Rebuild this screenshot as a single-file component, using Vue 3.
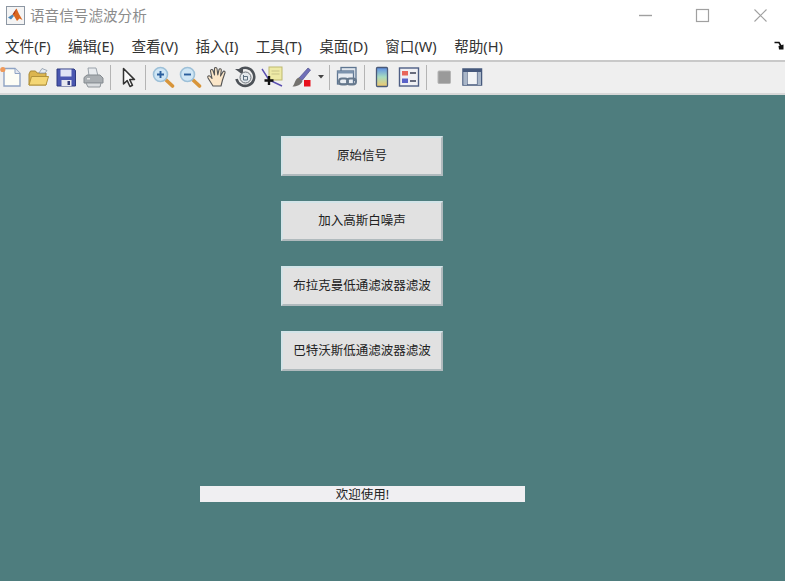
<script setup>
const menus = ['文件(F)', '编辑(E)', '查看(V)', '插入(I)', '工具(T)', '桌面(D)', '窗口(W)', '帮助(H)']
const buttons = ['原始信号', '加入高斯白噪声', '布拉克曼低通滤波器滤波', '巴特沃斯低通滤波器滤波']
</script>

<template>
  <div class="figure">
    <header class="titlebar">
      <svg class="logo" width="19" height="19" viewBox="0 0 19 19">
        <rect x="0.5" y="0.5" width="18" height="18" fill="#f4f4f4" stroke="#8d97a3" />
        <path d="M2 11.5 6.5 8.5 8 10 5 13.5Z" fill="#4a86b8" />
        <path d="M6.5 8.5 10.5 2.5 13 8 16.5 14 13.5 12.5 11 15 8 10Z" fill="#d9661f" />
        <path d="M10.5 2.5 8.5 8 6.5 8.5Z" fill="#a8391c" />
      </svg>
      <span class="title">语音信号滤波分析</span>
      <div class="win-controls">
        <button class="win-btn" type="button">
          <svg width="15" height="15" viewBox="0 0 15 15"><path d="M1 7.5H14" stroke="#a0a0a0" stroke-width="1.4" /></svg>
        </button>
        <button class="win-btn" type="button">
          <svg width="15" height="15" viewBox="0 0 15 15"><rect x="1.5" y="1.5" width="12" height="12" fill="none" stroke="#a0a0a0" stroke-width="1.2" /></svg>
        </button>
        <button class="win-btn" type="button">
          <svg width="15" height="15" viewBox="0 0 15 15"><path d="M1.5 1.5 13.5 13.5M13.5 1.5 1.5 13.5" stroke="#a0a0a0" stroke-width="1.1" /></svg>
        </button>
      </div>
    </header>

    <nav class="menubar">
      <span v-for="m in menus" :key="m" class="menu-item">{{ m }}</span>
      <svg class="dock" width="10" height="9" viewBox="0 0 10 9">
        <path d="M0.5 1.5H5L7 5" fill="none" stroke="#111" stroke-width="1.6" />
        <path d="M4.5 5 9.5 3.5V8.5H5Z" fill="#111" />
      </svg>
    </nav>

    <div class="toolbar">
      <div class="group">
        <!-- new -->
        <svg width="24" height="24" viewBox="0 0 24 24">
          <path d="M5 3.5H16L21 8.5V21H5Z" fill="#fdfdf6" stroke="#8fa3c4" stroke-width="1.4" />
          <path d="M16 3.5V8.5H21" fill="#e4e8f0" stroke="#8fa3c4" />
          <circle cx="3.8" cy="4.5" r="2.6" fill="#ef9a5a" />
        </svg>
        <!-- open -->
        <svg width="24" height="24" viewBox="0 0 24 24">
          <path d="M3 9V20H20V8H11L9.5 6H4.5Z" fill="#dcb54e" stroke="#a98a37" />
          <path d="M13 8 16 3.5 21 5.5 19 8Z" fill="#e6ecf2" stroke="#8b98a8" stroke-width="0.8" />
          <path d="M3 20 5.5 11.5H22.5L20 20Z" fill="#f4d675" stroke="#b3933a" />
        </svg>
        <!-- save -->
        <svg width="24" height="24" viewBox="0 0 24 24">
          <path d="M3 4H20L21.5 5.5V21H3Z" fill="#4a57b0" stroke="#2f3a80" />
          <rect x="6.5" y="4.5" width="11" height="7" fill="#dfe4f5" />
          <rect x="7.5" y="15" width="10" height="6" fill="#e8e8ef" />
          <rect x="13.5" y="16" width="2.5" height="4" fill="#333c7a" />
        </svg>
        <!-- print -->
        <svg width="24" height="24" viewBox="0 0 24 24">
          <path d="M7 3H15L17 11H8Z" fill="#e8ebee" stroke="#9aa2aa" />
          <path d="M3 12.5 6 10H19L22 13V18H3Z" fill="#a9aeb2" stroke="#858b90" />
          <path d="M5 18H20L19 22H7Z" fill="#d9dcdf" stroke="#8f959a" />
          <rect x="6" y="13" width="3" height="1.5" fill="#e5e5e5" />
        </svg>
      </div>
      <span class="sep"></span>
      <div class="group">
        <!-- arrow -->
        <svg width="24" height="24" viewBox="0 0 24 24">
          <path d="M7.5 3.5V19L11.2 15.6 14 21.5 16.5 20.3 13.7 14.6H18.5Z" fill="#fafafa" stroke="#333" stroke-width="1.5" stroke-linejoin="round" />
        </svg>
      </div>
      <span class="sep"></span>
      <div class="group">
        <!-- zoom in -->
        <svg width="24" height="24" viewBox="0 0 24 24">
          <path d="M14 14 21.5 21" stroke="#d8953a" stroke-width="3.6" stroke-linecap="round" />
          <circle cx="9.5" cy="9.5" r="7" fill="#cfe6f5" stroke="#9dc0d8" stroke-width="1.6" />
          <path d="M6 9.5H13M9.5 6V13" stroke="#2b5f9e" stroke-width="1.9" />
        </svg>
        <!-- zoom out -->
        <svg width="24" height="24" viewBox="0 0 24 24">
          <path d="M14 14 21.5 21" stroke="#d8953a" stroke-width="3.6" stroke-linecap="round" />
          <circle cx="9.5" cy="9.5" r="7" fill="#cfe6f5" stroke="#9dc0d8" stroke-width="1.6" />
          <path d="M6 9.5H13" stroke="#2b5f9e" stroke-width="1.9" />
        </svg>
        <!-- hand -->
        <svg width="24" height="24" viewBox="0 0 24 24">
          <path d="M8 21 3 13C2 11 4 10 5.3 11.5L7 13.5 5.5 6C5.3 4.3 7.5 4 8 5.5L9.5 10 9.5 3.7C9.5 2 11.8 2 12 3.7L12.8 10 14 4.7C14.4 3.2 16.5 3.6 16.3 5.2L15.5 11 18 6.7C18.8 5.5 20.6 6.3 20 7.8L17.5 15 16 21Z" fill="#fbe6c8" stroke="#555" stroke-width="1.1" stroke-linejoin="round" />
        </svg>
        <!-- rotate -->
        <svg width="24" height="24" viewBox="0 0 24 24">
          <path d="M7 4.5A9 9 0 1 1 3.5 14" fill="none" stroke="#4d5258" stroke-width="2.6" />
          <path d="M2 4H10V10Z" fill="#4d5258" />
          <circle cx="12.5" cy="12.5" r="5.5" fill="#e3e8ec" stroke="#6a7077" />
          <path d="M10.5 10V15H14.5V11.5H10.5" fill="none" stroke="#5d7080" />
        </svg>
        <!-- data cursor -->
        <svg width="24" height="24" viewBox="0 0 24 24">
          <path d="M2 4 9 15 22 21" fill="none" stroke="#5a4fb0" stroke-width="1.4" />
          <rect x="9" y="2" width="13" height="13" fill="#eeeaa6" stroke="#bdb96f" />
          <path d="M11.5 6H19.5M11.5 9H19.5" stroke="#c7c388" />
          <path d="M9 11V20M4.5 15.5H13.5" stroke="#111" stroke-width="2.4" />
        </svg>
        <!-- brush -->
        <svg class="brush" width="24" height="24" viewBox="0 0 24 24">
          <path d="M10 13 19 3 21.5 5 13 15.5Z" fill="#6f6fb8" stroke="#50508c" stroke-width="0.7" />
          <path d="M9.5 12.5 13.5 16C12 20 8 21.5 3.5 21.5 6 19.5 5.5 14.5 9.5 12.5Z" fill="#74726e" />
          <rect x="15" y="15" width="6.5" height="6.5" fill="#e8101c" />
        </svg>
        <svg class="caret" width="6" height="4" viewBox="0 0 6 4"><path d="M0 0H6L3 3.5Z" fill="#444" /></svg>
      </div>
      <span class="sep"></span>
      <div class="group">
        <!-- link -->
        <svg width="24" height="24" viewBox="0 0 24 24">
          <rect x="6" y="2.5" width="15" height="13" fill="#dfe5ec" stroke="#5f7691" stroke-width="1.3" />
          <rect x="2.5" y="6" width="16" height="13" fill="#e9edf2" stroke="#5f7691" stroke-width="1.3" />
          <path d="M2.5 6H18.5V8.5H2.5Z" fill="#7d93ad" />
          <rect x="4" y="13.5" width="9" height="6" rx="3" fill="none" stroke="#66788c" stroke-width="2" />
          <rect x="12" y="13.5" width="9" height="6" rx="3" fill="none" stroke="#66788c" stroke-width="2" />
        </svg>
      </div>
      <span class="sep"></span>
      <div class="group">
        <!-- colorbar -->
        <svg width="24" height="24" viewBox="0 0 24 24">
          <defs>
            <linearGradient id="cbar" x1="0" y1="0" x2="0" y2="1">
              <stop offset="0" stop-color="#5d8ee6" />
              <stop offset="0.5" stop-color="#a8dcc0" />
              <stop offset="1" stop-color="#f2c86a" />
            </linearGradient>
          </defs>
          <rect x="6.5" y="2.5" width="11" height="19" rx="1" fill="url(#cbar)" stroke="#4a5a78" stroke-width="1.3" />
        </svg>
        <!-- legend -->
        <svg width="24" height="24" viewBox="0 0 24 24">
          <rect x="2.5" y="3" width="19" height="18" fill="#f0f0f4" stroke="#4f5f85" stroke-width="1.4" />
          <rect x="5" y="6" width="6" height="4.5" fill="#e8655a" />
          <rect x="5" y="13.5" width="6" height="4.5" fill="#5a62c8" />
          <path d="M13 8H19M13 16H19" stroke="#3a3f55" stroke-width="1.6" />
        </svg>
      </div>
      <span class="sep"></span>
      <div class="group">
        <!-- hide plot tools -->
        <svg width="24" height="24" viewBox="0 0 24 24">
          <rect x="6" y="6" width="12.5" height="12.5" rx="1" fill="#9a9a9a" stroke="#b5b5b5" />
        </svg>
        <!-- show plot tools -->
        <svg width="24" height="24" viewBox="0 0 24 24">
          <rect x="3" y="4" width="18.5" height="16" fill="#f2f4f6" stroke="#46597c" stroke-width="1.5" />
          <rect x="3" y="4" width="18.5" height="3" fill="#46597c" />
          <path d="M7 7V20M17.5 7V20" stroke="#46597c" stroke-width="1.2" />
          <rect x="3.5" y="7" width="3.5" height="13" fill="#a9b6c8" />
          <rect x="17.5" y="7" width="3.5" height="13" fill="#a9b6c8" />
        </svg>
      </div>
    </div>

    <main class="canvas">
      <button v-for="b in buttons" :key="b" class="push" type="button">{{ b }}</button>
      <div class="status">欢迎使用!</div>
    </main>
  </div>
</template>

<style>
html,
body {
  margin: 0;
  overflow: hidden;
}
</style>

<style scoped>
.figure {
  width: 785px;
  height: 581px;
  display: flex;
  flex-direction: column;
  font-family: "Noto Sans", "Noto Sans CJK SC", sans-serif;
  background: #fff;
  overflow: hidden;
}

.titlebar {
  height: 30px;
  display: flex;
  align-items: center;
  padding-left: 6px;
  flex: none;
}

.logo {
  margin-right: 5px;
}

.title {
  font-size: 14.6px;
  color: #8c8c8c;
  white-space: nowrap;
  margin-bottom: 2px;
}

.win-controls {
  margin-left: auto;
  margin-right: -4px;
  display: flex;
}

.win-btn {
  width: 57.5px;
  height: 30px;
  padding: 0;
  border: 0;
  background: none;
  display: flex;
  align-items: center;
  justify-content: center;
}

.menubar {
  height: 32px;
  flex: none;
  display: flex;
  align-items: center;
  gap: 17.4px;
  padding: 1px 0 0 5px;
  border-bottom: 2px solid #c9c9c9;
  box-sizing: border-box;
  font-size: 14.6px;
  color: #333;
}

.menu-item {
  white-space: nowrap;
}

.dock {
  margin-left: auto;
  margin-right: 1px;
}

.toolbar {
  height: 31px;
  flex: none;
  display: flex;
  align-items: center;
  padding-bottom: 1px;
  box-sizing: content-box;
  height: 30px;
  background: #efefef;
  border-bottom: 2px solid #d8d8d8;
}

.group {
  display: flex;
  align-items: center;
  gap: 3.3px;
}

.group:first-child {
  margin-left: -1px;
}

.brush {
  margin-left: 1.5px;
}

.caret {
  margin-left: 2px;
}

.sep {
  width: 1px;
  height: 25px;
  margin: 0 5px;
  background: #b4b4b4;
}

.canvas {
  flex: 1;
  background: #4e7d7e;
  display: flex;
  flex-direction: column;
  align-items: flex-start;
  padding: 41px 0 0 281px;
}

.push {
  width: 162px;
  height: 40px;
  padding: 0 0 3px;
  margin-bottom: 25px;
  background: #e1e1e1;
  border: 2px solid;
  border-color: #d3e4e8 #b0babd #b0babd #d3e4e8;
  box-sizing: border-box;
  font-family: inherit;
  font-size: 12.5px;
  color: #222;
  white-space: nowrap;
}

.status {
  width: 325px;
  height: 16px;
  margin: 90px 0 0 -81px;
  background: #f0eff2;
  font-size: 12.5px;
  line-height: 17px;
  text-align: center;
  color: #222;
}
</style>
